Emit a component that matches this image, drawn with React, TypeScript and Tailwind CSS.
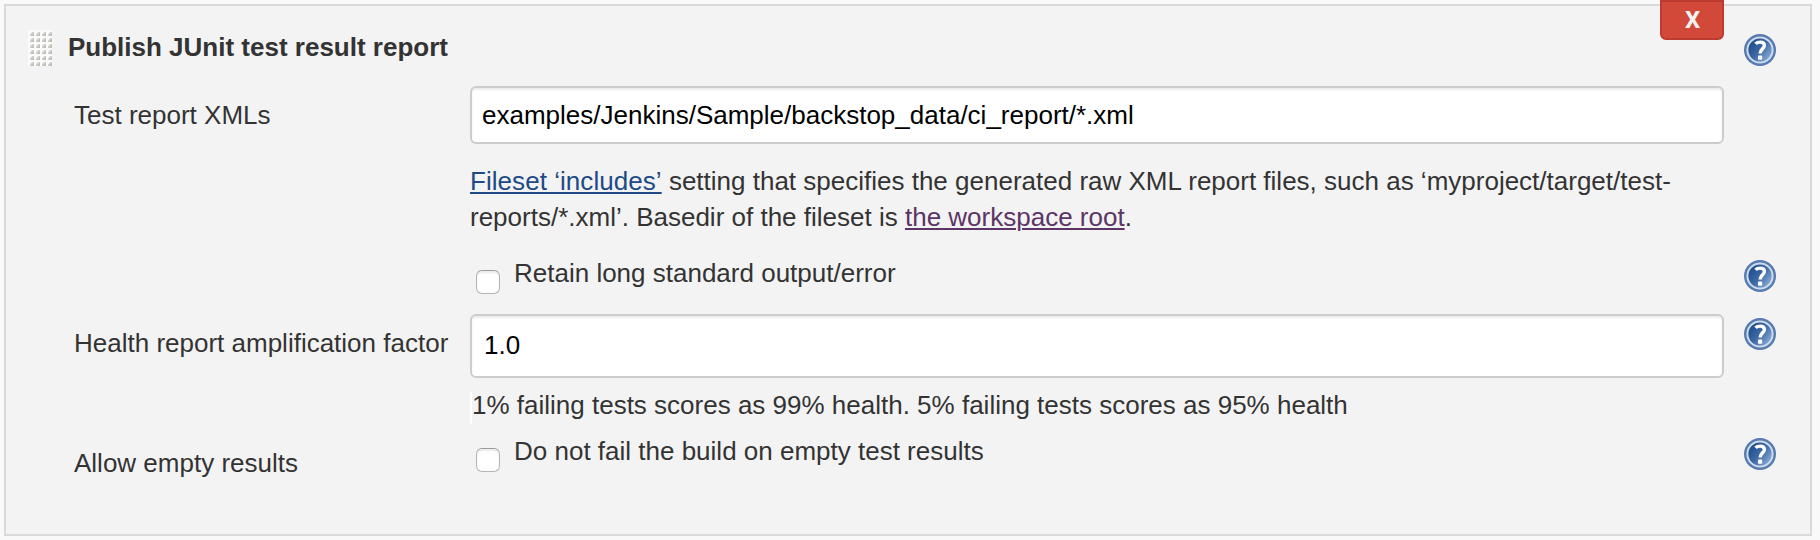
import React from "react";

function HelpIcon({ className = "" }: { className?: string }) {
  return (
    <svg viewBox="0 0 32 32" className={`h-8 w-8 shrink-0 ${className}`} role="img" aria-label="Help">
      <defs>
        <linearGradient id="helpFill" x1="0" y1="0.1" x2="1" y2="0.9">
          <stop offset="0.15" stopColor="#23508f" />
          <stop offset="0.5" stopColor="#3d69a4" />
          <stop offset="0.95" stopColor="#8fb3dc" />
        </linearGradient>
      </defs>
      <circle cx="16" cy="16" r="16" fill="#567bb1" />
      <circle cx="16" cy="16" r="12.6" fill="url(#helpFill)" stroke="#cfdbeb" strokeWidth="2" />
      <path
        d="M11.6 9.9C12.6 8.7 14.2 8.1 16.2 8.1C18.9 8.1 20.4 9.4 20.4 11.4C20.4 14.6 16.1 15 16.1 19.6"
        fill="none"
        stroke="#fff"
        strokeWidth="3.4"
      />
      <rect x="14" y="21.6" width="4.2" height="4.2" rx="0.8" fill="#fff" />
    </svg>
  );
}

function DragHandle() {
  const dots = [];
  for (let r = 0; r < 6; r++)
    for (let c = 0; c < 4; c++)
      dots.push(
        <path key={`${r}-${c}`} d={`M${c * 6 + 6} ${r * 6 + 2}v4h-4v-2l2-2z`} fill="url(#dotFill)" />
      );
  return (
    <svg viewBox="0 0 24 36" className="mt-6 ml-[22px] h-9 w-6 shrink-0">
      <defs>
        <linearGradient id="dotFill" x1="0" y1="0" x2="1" y2="1">
          <stop offset="0.2" stopColor="#e0e0dc" />
          <stop offset="0.8" stopColor="#bcbcb6" />
        </linearGradient>
      </defs>
      <rect width="24" height="36" fill="#fbfbfb" />
      {dots}
    </svg>
  );
}

function Checkbox({ className = "" }: { className?: string }) {
  return (
    <span
      className={`ml-1.5 h-6 w-6 shrink-0 rounded-[6px] border border-[#b4b4b4] border-t-[#9c9c9c] bg-white shadow-[inset_0_2px_2px_#ececec] ${className}`}
    />
  );
}

const field =
  "flex w-[1254px] shrink-0 items-center rounded-[6px] border-2 border-[#cccccc] bg-white text-black shadow-[inset_0_2px_2px_rgba(0,0,0,0.075)]";

export default function App() {
  return (
    <div className="h-[540px] w-[1820px] overflow-hidden bg-[#f9f9f9] pt-1 pl-1 font-['Liberation_Sans',Arial,sans-serif] text-[26px] leading-[30px] whitespace-nowrap text-[#333333]">
      <section className="relative h-[532px] w-[1808px] border-2 border-[#d9d9d9] bg-[#f3f3f3]">
        <button className="absolute -top-1.5 left-[1654px] flex h-10 w-16 items-center justify-center rounded-b-[6px] border-2 border-[#bd3a30] bg-[#d24939] pl-px font-['Roboto',sans-serif] text-[24px] font-bold text-[#f3f3f3]">
          X
        </button>

        <header className="flex h-20">
          <DragHandle />
          <h2 className="mt-[26px] ml-4 w-[1676px] font-bold">Publish JUnit test result report</h2>
          <HelpIcon className="mt-7" />
        </header>

        <div className="flex h-[58px]">
          <label className="w-[464px] pt-3.5 pl-[68px]">Test report XMLs</label>
          <div className={`${field} pl-2.5`}>examples/Jenkins/Sample/backstop_data/ci_report/*.xml</div>
        </div>

        <p className="mt-[19px] ml-[464px] h-[72px] leading-9">
          <a className="tracking-[0.05px] text-[#204a87] underline decoration-2 underline-offset-2">
            Fileset ‘includes’
          </a>{" "}
          setting that specifies the generated raw XML report files, such as ‘myproject/target/test-
          <br />
          reports/*.xml’. Basedir of the fileset is{" "}
          <a className="text-[#5c3566] underline decoration-2 underline-offset-2">the workspace root</a>.
        </p>

        <div className="flex h-[79px] pl-[464px]">
          <Checkbox className="mt-[35px]" />
          <label className="ml-3.5 w-[1230px] pt-[23px]">Retain long standard output/error</label>
          <HelpIcon className="mt-[25px]" />
        </div>

        <div className="flex h-16">
          <label className="w-[464px] pt-3.5 pl-[68px]">Health report amplification factor</label>
          <div className={`${field} pb-0.5 pl-3`}>1.0</div>
          <HelpIcon className="mt-1 ml-5" />
        </div>

        <div className="mt-3.5 ml-[464px] flex h-8 border-l-2 border-white">
          <div className="-mt-0.5">1% failing tests scores as 99% health. 5% failing tests scores as 95% health</div>
        </div>

        <div className="flex pt-3">
          <label className="w-[464px] pt-3 pl-[68px]">Allow empty results</label>
          <Checkbox className="mt-3" />
          <label className="ml-3.5 w-[1230px]">Do not fail the build on empty test results</label>
          <HelpIcon className="mt-0.5" />
        </div>
      </section>
    </div>
  );
}
